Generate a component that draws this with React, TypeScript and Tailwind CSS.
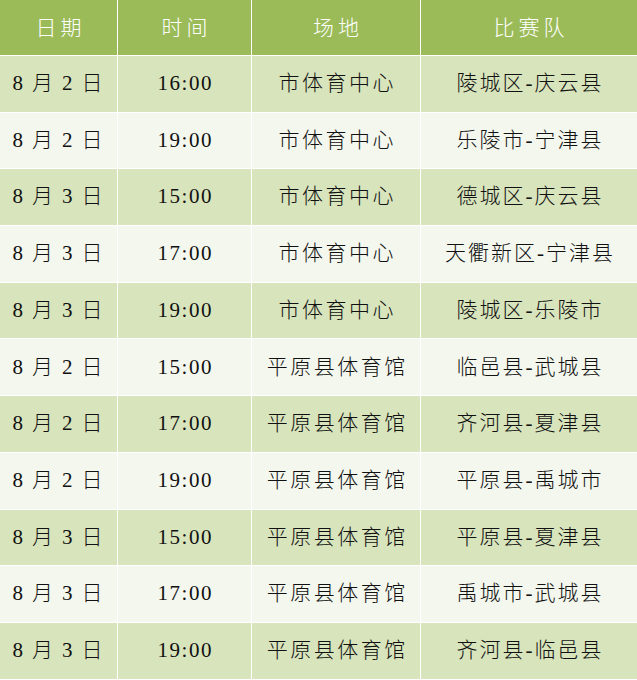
import React from "react";

const rows: [string, string, string, string][] = [
  ["2", "16:00", "市体育中心", "陵城区-庆云县"],
  ["2", "19:00", "市体育中心", "乐陵市-宁津县"],
  ["3", "15:00", "市体育中心", "德城区-庆云县"],
  ["3", "17:00", "市体育中心", "天衢新区-宁津县"],
  ["3", "19:00", "市体育中心", "陵城区-乐陵市"],
  ["2", "15:00", "平原县体育馆", "临邑县-武城县"],
  ["2", "17:00", "平原县体育馆", "齐河县-夏津县"],
  ["2", "19:00", "平原县体育馆", "平原县-禹城市"],
  ["3", "15:00", "平原县体育馆", "平原县-夏津县"],
  ["3", "17:00", "平原县体育馆", "禹城市-武城县"],
  ["3", "19:00", "平原县体育馆", "齐河县-临邑县"],
];

export default function App() {
  return (
    <div className="w-[637px] h-[680px] overflow-hidden bg-white">
      <div className="grid grid-cols-[117px_133px_168px_216px] grid-rows-[55px_repeat(11,55.7px)] gap-px bg-white font-['Liberation_Serif','Noto_Sans_CJK_SC',serif] text-[21px] font-light">
        {["日期", "时间", "场地", "比赛队"].map((h) => (
          <div
            key={h}
            className="flex items-center justify-center bg-[#9bbb59] text-white tracking-[4px] pl-[4px] pt-[2px]"
          >
            {h}
          </div>
        ))}
        {rows.map((r, i) => {
          const bg = i % 2 === 0 ? "bg-[#d8e4bc]" : "bg-[#f4f7ee]";
          return (
            <React.Fragment key={i}>
              <div className={`flex items-center justify-center gap-[9px] pr-[2px] ${bg} text-[#111]`}>
                <span>8</span>
                <span>月</span>
                <span>{r[0]}</span>
                <span>日</span>
              </div>
              <div className={`flex items-center justify-center ${bg} text-[#111] tracking-[1.5px] pl-[1.5px]`}>
                {r[1]}
              </div>
              <div className={`flex items-center justify-center ${bg} text-[#111] tracking-[2.5px] pl-[2.5px]`}>
                {r[2]}
              </div>
              <div className={`flex items-center justify-center ${bg} text-[#111] tracking-[2px] pl-[2px]`}>
                {r[3]}
              </div>
            </React.Fragment>
          );
        })}
      </div>
    </div>
  );
}
